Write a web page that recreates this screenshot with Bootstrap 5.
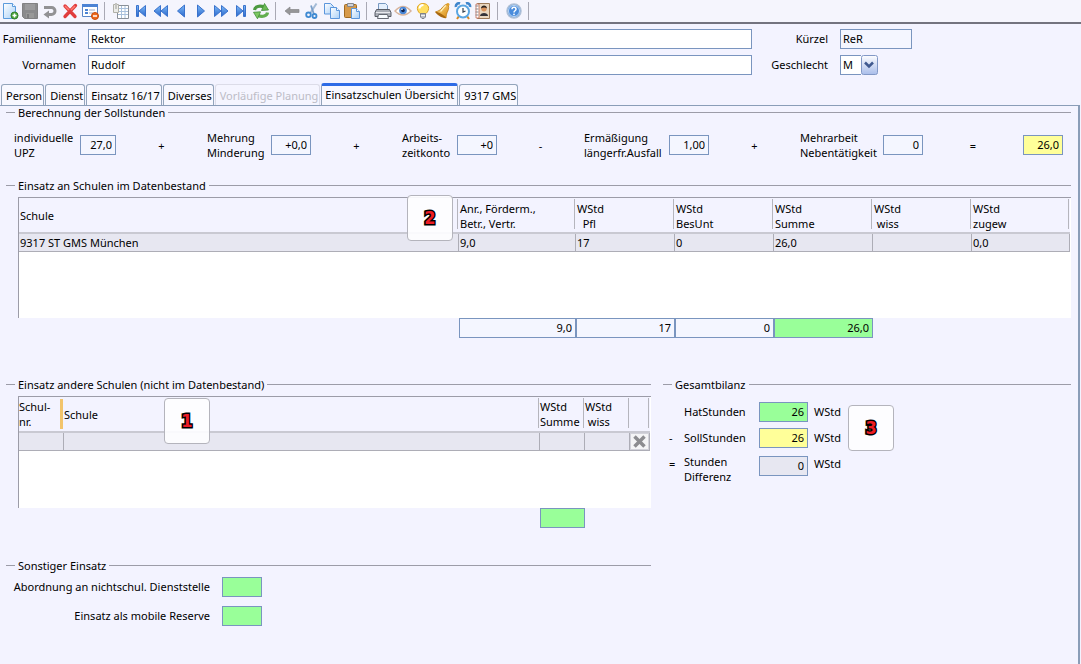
<!DOCTYPE html>
<html lang="de">
<head>
<meta charset="utf-8">
<meta name="viewport" content="width=device-width, initial-scale=1">
<title>Lehrkraft – Einsatzschulen Übersicht</title>
<link href="https://cdn.jsdelivr.net/npm/bootstrap@5.3.0/dist/css/bootstrap.min.css" rel="stylesheet">
<style>
:root { --bg:#f3f3ff; --edge:#7a95bf; --rule:#9c9ca8; --panel:#8a9db8; --hit:#99ff99; --soll:#ffff99; --rowbg:#e7e7f1; }
body { background:var(--bg); color:#000; font:11px/15px "Noto Sans","Open Sans",sans-serif; }
.toolbar { height:24px; border-bottom:2px solid #73737f; background:#f5f5fd; }
.tool { width:20px; height:22px; padding:0; border:0; background:none; display:flex; align-items:center; justify-content:center; }
.tool svg { width:18px; height:18px; }
.split { width:1px; height:18px; background:#a9a9b4; margin:0 6px 0 4px; }
.field { height:20px; border:1px solid var(--edge); border-radius:0; background:#fff; color:#000; padding:0 2px 1px; font:inherit; min-width:0; outline:0; }
.plain { background:#f4f6ff; }
.num { text-align:right; padding-right:3px; }
.hit { background:var(--hit); }
.soll { background:var(--soll); }
.diff { background:var(--rowbg); }
.w-s { width:36px; } .w-m { width:40px; } .w-l { width:49px; } .w-k { width:72px; }
.person { display:grid; grid-template-columns:76px 1fr 64px 229px; gap:6px 12px; padding:5px 12px 0 0; align-items:center; }
.person label, .other label, .balance label, .balance span { padding-bottom:2px; }
.pick { width:38px; height:20px; }
.pick select { width:38px; appearance:none; }
.pick svg { position:absolute; right:0; top:0; pointer-events:none; }
.tabs { gap:1px; margin-top:8px; height:22px; padding-left:1px; }
.tabs button { height:21px; padding:0 1px 0 4px; border:1px solid #93a4bb; border-bottom:0; border-radius:3px 3px 0 0; background:#f8f8ff; color:#000; font:inherit; line-height:15px; white-space:nowrap; }
.tabs button.active { height:22px; padding:0 3px 3px; border-top:3px solid #2e6be6; }
.tabs button:disabled { color:#bcbcc6; border-color:#dcdce8; background:#f5f5ff; }
.panel { border-top:1px solid var(--panel); border-right:2px solid var(--panel); margin-right:1px; padding:0 7px 0 6px; }
fieldset legend { float:none; display:flex; align-items:center; gap:3px; height:13px; margin:0; font-size:11px; line-height:13px; }
fieldset legend::before, fieldset legend::after { content:""; height:1px; background:var(--rule); }
fieldset legend::before { width:9px; }
fieldset legend::after { flex:1; }
.calc { display:grid; grid-template-columns:102px 91fr 104px 91fr 95px 87fr 125px 91fr 123px 100fr 40px; align-items:center; margin:11px 8px 19px; }
.calc > div { display:flex; justify-content:space-between; align-items:center; white-space:nowrap; }
.calc > span { text-align:center; }
.sheet { margin:5px 0 0 12px; border:solid var(--rule); border-width:1px 0 0 1px; background:#fff; padding-right:1px; }
.sheet-a { height:121px; } .sheet-b { height:112px; }
.sheet table { width:100%; table-layout:fixed; border-collapse:separate; border-spacing:0; }
.sheet th { height:36px; padding:1px 1px 0; font-weight:400; background:linear-gradient(#b5b5bd,#b5b5bd) right 1px bottom 3px/1px 30px no-repeat var(--bg); border-bottom:2px solid #c9c9d2; white-space:pre; position:relative; }
.sheet th.mark-col { background:linear-gradient(#f2c46c,#f2c46c) right 1px bottom 2px/3px 30px no-repeat var(--bg); }
.sheet-b th { padding:0; }
.sheet td { height:18px; padding:0 1px; line-height:17px; background:var(--rowbg); border:solid #adadb6; border-width:0 1px 1px 0; }
.c-45 { width:45px; } .c-20 { width:20px; } .c-98 { width:98px; } .c-99 { width:99px; } .c-117 { width:117px; }
.remove { display:block; width:19px; height:17px; padding:0; border:1px solid #d2d2da; background:#f4f4f6; line-height:0; }
.sums-a { padding-right:198px; margin-bottom:40px; } .sums-b { padding-right:66px; margin-bottom:31px; }
.lower { display:grid; grid-template-columns:645fr 408fr; gap:12px; }
.balance { display:grid; grid-template-columns:9px 69px 49px auto; gap:6px; margin-top:11px; padding-left:6px; align-items:center; }
.balance .low { align-self:start; margin-top:2px; }
.other { display:grid; grid-template-columns:204px 40px; gap:9px 12px; margin-top:5px; align-items:center; }
.callout-no { width:46px; height:46px; border:1px solid #b4b4bc; border-radius:4px; background:rgba(253,253,255,.93); display:flex; align-items:center; justify-content:center; font:700 18px/1 "DejaVu Sans Condensed","DejaVu Sans",sans-serif; color:#ed1c24; -webkit-text-stroke:3px #000; paint-order:stroke fill; }
.over { position:absolute; top:-3px; right:6px; z-index:2; }
.over-b { top:1px; left:100px; }
.side { margin:14px 0 0 7px; }
</style>
</head>
<body class="d-flex flex-column min-vh-100">
<svg width="0" height="0" class="position-absolute" aria-hidden="true">
  <defs>
    <linearGradient id="blue" x2="0" y2="1"><stop stop-color="#7dbbf8"/><stop offset="1" stop-color="#2a66cc"/></linearGradient>
    <linearGradient id="sheetfill" x2="1" y2="1"><stop stop-color="#fff"/><stop offset="1" stop-color="#a9d0f7"/></linearGradient>
    <linearGradient id="gold" x2="1" y2="1"><stop stop-color="#ffe28a"/><stop offset="1" stop-color="#d98a12"/></linearGradient>
    <linearGradient id="drop" x2="0" y2="1"><stop stop-color="#fdfdff"/><stop offset="1" stop-color="#a9bdea"/></linearGradient>
    <symbol id="tri" viewBox="0 0 18 18"><path d="M12.500 3v12L5.500 9z" fill="url(#blue)" stroke="#3a72cc"/></symbol>
    <symbol id="dbl" viewBox="0 0 18 18"><path d="M8.500 3.500v11L2 9zM15.500 3.500v11L9 9z" fill="url(#blue)" stroke="#3a72cc"/></symbol>
    <symbol id="end" viewBox="0 0 18 18"><path d="M4.500 3.500h2v11h-2zM13.500 3.500v11L7 9z" fill="url(#blue)" stroke="#3a72cc"/></symbol>
  </defs>
</svg>

<header class="toolbar d-flex align-items-center" role="toolbar" aria-label="Werkzeuge">
  <button class="tool" type="button" aria-label="Neu"><svg viewBox="0 0 18 18"><path d="M2.500 1.500h9l3 3v12h-12z" fill="url(#sheetfill)" stroke="#5b9bdc"/><path d="M11.500 1.500v3h3" fill="#fff" stroke="#5b9bdc"/><circle cx="13.500" cy="13.500" r="3.500" fill="#4aa53c" stroke="#2f7d28"/><path d="M13.500 11.500v4M11.500 13.500h4" stroke="#fff" stroke-width="1.500"/></svg></button>
  <button class="tool" type="button" aria-label="Speichern"><svg viewBox="0 0 18 18"><path d="M1.500 1.500h15v15h-13l-2-2z" fill="#8b8b8d" stroke="#818183"/><path d="M4 2h10v6H4z" fill="#9b9b9d"/><path d="M5 11h8v5H5z" fill="#999"/><path d="M6 12h2v4H6z" fill="#7d7d7f"/></svg></button>
  <button class="tool" type="button" aria-label="Rückgängig"><svg viewBox="0 0 18 18"><path d="M3 5.500h7.500a3.300 3.300 0 0 1 0 7H7" fill="none" stroke="#929294" stroke-width="3"/><path d="M8 8.500v8L2.500 12.500z" fill="#929294"/></svg></button>
  <button class="tool" type="button" aria-label="Löschen"><svg viewBox="0 0 18 18"><path d="M4 4l10 10.500M14.500 3.500L4 14.500" stroke="#e03c3c" stroke-width="3.300" stroke-linecap="round"/><path d="M4 4l4 4M14 4l-4 4" stroke="#ff7d74" stroke-width="1.500"/></svg></button>
  <button class="tool" type="button" aria-label="Formular schließen"><svg viewBox="0 0 18 18"><path d="M1.500 2.500h15v12h-15z" fill="#fff" stroke="#5a86c8"/><path d="M1 2h16v3H1z" fill="#4c83d4"/><path d="M4 8h3M4 11h3" stroke="#4c83d4" stroke-width="2"/><path d="M8 8h6M8 11h4" stroke="#9aa9c4"/><circle cx="14" cy="14" r="3.500" fill="#ee6a1c" stroke="#c74d0d"/><path d="M12 14h4" stroke="#fff" stroke-width="1.500"/></svg></button>
  <span class="split"></span>
  <button class="tool" type="button" aria-label="Liste"><svg viewBox="0 0 18 18"><path d="M5.500 3.500h11v13h-11z" fill="#fff" stroke="#8a9098"/><path d="M6 6.500h10M6 9.500h10M6 12.500h10M9.500 4v12M13 4v12" stroke="#a9c0dc"/><path d="M1.500 2.500h5v8h-5z" fill="#ecece8" stroke="#b0b0a8"/><path d="M3 1h2v6H3z" fill="#c4c4c0"/></svg></button>
  <button class="tool" type="button" aria-label="Erster"><svg><use href="#end"/></svg></button>
  <button class="tool" type="button" aria-label="Schnell zurück"><svg><use href="#dbl"/></svg></button>
  <button class="tool" type="button" aria-label="Zurück"><svg><use href="#tri"/></svg></button>
  <button class="tool" type="button" aria-label="Weiter"><svg viewBox="0 0 18 18"><use href="#tri" transform="matrix(-1 0 0 1 18 0)"/></svg></button>
  <button class="tool" type="button" aria-label="Schnell vor"><svg viewBox="0 0 18 18"><use href="#dbl" transform="matrix(-1 0 0 1 18 0)"/></svg></button>
  <button class="tool" type="button" aria-label="Letzter"><svg viewBox="0 0 18 18"><use href="#end" transform="matrix(-1 0 0 1 18 0)"/></svg></button>
  <button class="tool" type="button" aria-label="Aktualisieren"><svg viewBox="0 0 18 18"><path d="M2.500 8C3 4.500 7.500 3 12.500 5.200" fill="none" stroke="#4c9a40" stroke-width="3.200"/><path d="M12.500 1.500l4 6.500-7 .5z" fill="#6cb955" stroke="#3f8f36" stroke-width=".8"/><path d="M15.500 10.500c-.5 3.500-5 5-10 2.800" fill="none" stroke="#62ae50" stroke-width="3.200"/><path d="M5.500 16.800l-4-6.500 7-.5z" fill="#7cc763" stroke="#3f8f36" stroke-width=".8"/></svg></button>
  <span class="split"></span>
  <button class="tool" type="button" aria-label="Abbrechen"><svg viewBox="0 0 18 18"><path d="M2 9l5-4v2.500h9v3H7V13z" fill="#969698" stroke="#87878a" stroke-width=".7"/></svg></button>
  <button class="tool" type="button" aria-label="Ausschneiden"><svg viewBox="0 0 18 18"><path d="M13.500 1.500L7 11.500" stroke="#a4bbd6" stroke-width="2"/><path d="M8 3.500l3 9" stroke="#7a9fca" stroke-width="1.800"/><circle cx="5.500" cy="12.800" r="2.300" fill="none" stroke="#3f8ad2" stroke-width="1.800"/><circle cx="11.500" cy="14" r="2" fill="none" stroke="#3f8ad2" stroke-width="1.800"/></svg></button>
  <button class="tool" type="button" aria-label="Kopieren"><svg viewBox="0 0 18 18"><path d="M1.500 1.500h6l3 3v7.500h-9z" fill="url(#sheetfill)" stroke="#5b96dc"/><path d="M7.500 5.500h6l3 3v8h-9z" fill="url(#sheetfill)" stroke="#5b96dc"/><path d="M13.500 5.500v3h3" fill="#fff" stroke="#5b96dc"/></svg></button>
  <button class="tool" type="button" aria-label="Einfügen"><svg viewBox="0 0 18 18"><rect x="1.500" y="2.500" width="12" height="13" rx="1" fill="#d79a4a" stroke="#a06a22"/><path d="M4.500 1.500h6v3h-6z" fill="#d0d3da" stroke="#85888f"/><path d="M8.500 6.500h5l3 3v7h-8z" fill="url(#sheetfill)" stroke="#5b96dc"/><path d="M13.500 6.500v3h3" fill="#fff" stroke="#5b96dc"/></svg></button>
  <span class="split"></span>
  <button class="tool" type="button" aria-label="Drucken"><svg viewBox="0 0 18 18"><path d="M4.500 8V1.500h7l2 2V8" fill="#e4effc" stroke="#7798c0"/><path d="M2.500 7.500h13l1.500 3v4H1v-4z" fill="#a9adb6" stroke="#585c66"/><path d="M2 10.500h14" stroke="#e9e9ee"/><path d="M4.500 12.500h9l1 4h-11z" fill="#f8fbff" stroke="#666a74"/></svg></button>
  <button class="tool" type="button" aria-label="Vorschau"><svg viewBox="0 0 18 18"><path d="M1 9q8-9 16 0-8 8-16 0z" fill="#fff" stroke="#d8b49c" stroke-width="1.500"/><circle cx="9" cy="8.500" r="3.800" fill="#4a87d8"/><circle cx="9" cy="8.500" r="1.800" fill="#10234f"/><circle cx="8" cy="7.200" r=".8" fill="#fff"/></svg></button>
  <button class="tool" type="button" aria-label="Hinweis"><svg viewBox="0 0 18 18"><path d="M6 11.500C1.500 7.500 3 1.500 9 1.500s7.500 6 3 10z" fill="#ffdf62" stroke="#e0a526"/><path d="M5.500 6.500a4 4 0 0 1 4-3.500" stroke="#fff" stroke-width="2" fill="none"/><path d="M6.500 11.500h5v3.500l-1.500 1.500H8L6.500 15z" fill="#b5b9c2" stroke="#7e828c"/><path d="M7 13.500h4" stroke="#eee"/></svg></button>
  <button class="tool" type="button" aria-label="Erinnerung"><svg viewBox="0 0 18 18"><path d="M13.500 2C11 2.500 9.500 4 8 6 6 8.500 4 9 1.500 10l10.500 6c.2-3 .6-4.500 1.800-7 1-2 1.500-4.500-.3-7z" fill="url(#gold)" stroke="#c07c12" stroke-width=".8"/><path d="M1.500 10c1-1 9.500 3.500 10.500 6-2 1-10-3-10.500-6z" fill="#a8670f"/><path d="M12 3.500C9.500 5 8.500 8 6.500 9.500" stroke="#fff3c0" fill="none" stroke-width="1.200"/><circle cx="14" cy="2.500" r="1.500" fill="#e0a02a"/></svg></button>
  <button class="tool" type="button" aria-label="Termine"><svg viewBox="0 0 18 18"><path d="M2 5a3 3 0 0 1 4-3.500M16 5a3 3 0 0 0-4-3.500" stroke="#3f86cc" stroke-width="2.600" fill="none"/><path d="M5 14l-2 3M13 14l2 3" stroke="#d88a24" stroke-width="2"/><circle cx="9" cy="9.500" r="6" fill="#fff" stroke="#5aa6e2" stroke-width="2"/><path d="M9 6v4l2.500-1" stroke="#33414f" fill="none" stroke-width="1.200"/></svg></button>
  <button class="tool" type="button" aria-label="Adressbuch"><svg viewBox="0 0 18 18"><path d="M3.500 1.500h12v15h-12z" fill="#e9d7bf" stroke="#9b7a59"/><path d="M2 2h3v14H2z" fill="#fff" stroke="#bf6750" stroke-width=".8"/><path d="M1.500 4h3M1.500 7h3M1.500 10h3M1.500 13h3" stroke="#8b8b92"/><path d="M6 14c0-4 8-4 8 0z" fill="#34343a"/><circle cx="10" cy="6.800" r="2.700" fill="#d9935c"/><path d="M7 6.500c0-4 6-4 6 0-1.500-1.500-4-1.500-6 0z" fill="#2d2420"/></svg></button>
  <span class="split"></span>
  <button class="tool" type="button" aria-label="Hilfe"><svg viewBox="0 0 18 18"><circle cx="9" cy="9" r="7" fill="#5a9ce4" stroke="#aebfd6" stroke-width="1.500"/><circle cx="9" cy="9" r="5.500" fill="#4a8cdc" stroke="#d7e6f8" stroke-width=".8"/><path d="M7 7.300c0-2.600 4-2.600 4 0 0 1.500-2 1.500-2 3.200" fill="none" stroke="#fff" stroke-width="1.500"/><circle cx="9" cy="12.300" r=".9" fill="#fff"/></svg></button>
  <span class="split"></span>
</header>

<form class="person">
  <label class="text-end" for="fam">Familienname</label><input class="field" id="fam" value="Rektor">
  <label class="text-end" for="kz">Kürzel</label><input class="field plain w-k" id="kz" value="ReR" readonly>
  <label class="text-end" for="vor">Vornamen</label><input class="field" id="vor" value="Rudolf">
  <label class="text-end" for="sex">Geschlecht</label>
  <div class="pick position-relative d-flex"><select class="field" id="sex"><option>M</option><option>W</option></select>
    <svg width="17" height="20" viewBox="0 0 17 20"><rect width="17" height="20" fill="#f3f3ff"/><rect x=".5" y=".5" width="16" height="19" rx="2" fill="url(#drop)" stroke="#8298c6"/><path d="M4 7.500l4 4 4-4" fill="none" stroke="#40598f" stroke-width="2.500"/></svg></div>
</form>

<nav class="tabs d-flex align-items-end" role="tablist">
  <button type="button" role="tab">Person</button>
  <button type="button" role="tab">Dienst</button>
  <button type="button" role="tab">Einsatz 16/17</button>
  <button type="button" role="tab">Diverses</button>
  <button type="button" role="tab" disabled>Vorläufige Planung</button>
  <button type="button" role="tab" class="active" aria-selected="true">Einsatzschulen Übersicht</button>
  <button type="button" role="tab">9317 GMS</button>
</nav>

<main class="panel flex-grow-1">
  <fieldset>
    <legend>Berechnung der Sollstunden</legend>
    <div class="calc">
      <div><label for="upz">individuelle<br>UPZ</label><input class="field plain num w-s" id="upz" value="27,0" readonly></div>
      <span>+</span>
      <div><label for="mm">Mehrung<br>Minderung</label><input class="field plain num w-m" id="mm" value="+0,0" readonly></div>
      <span>+</span>
      <div><label for="azk">Arbeits-<br>zeitkonto</label><input class="field plain num w-m" id="azk" value="+0" readonly></div>
      <span>-</span>
      <div><label for="erm">Ermäßigung<br>längerfr.Ausfall</label><input class="field plain num w-m" id="erm" value="1,00" readonly></div>
      <span>+</span>
      <div><label for="mna">Mehrarbeit<br>Nebentätigkeit</label><input class="field plain num w-m" id="mna" value="0" readonly></div>
      <span>=</span>
      <input class="field num soll w-m" aria-label="Sollstunden" value="26,0" readonly>
    </div>
  </fieldset>

  <fieldset>
    <legend>Einsatz an Schulen im Datenbestand</legend>
    <div class="sheet sheet-a">
      <table>
        <colgroup><col><col class="c-117"><col class="c-99"><col class="c-99"><col class="c-99"><col class="c-99"><col class="c-98"></colgroup>
        <thead><tr><th>Schule<span class="callout-no over">2</span></th><th>Anr., Förderm.,<br>Betr., Vertr.</th><th>WStd<br>&nbsp; Pfl</th><th>WStd<br>BesUnt</th><th>WStd<br>Summe</th><th>WStd<br>&nbsp;wiss</th><th>WStd<br>zugew</th></tr></thead>
        <tbody><tr><td>9317 ST GMS München</td><td>9,0</td><td>17</td><td>0</td><td>26,0</td><td></td><td>0,0</td></tr></tbody>
      </table>
    </div>
    <div class="sums-a d-flex justify-content-end">
      <input class="field plain num c-117" aria-label="Summe Anrechnungen" value="9,0" readonly>
      <input class="field plain num c-99" aria-label="Summe Pflicht" value="17" readonly>
      <input class="field plain num c-99" aria-label="Summe BesUnt" value="0" readonly>
      <input class="field hit num c-99" aria-label="Gesamtsumme" value="26,0" readonly>
    </div>
  </fieldset>

  <div class="lower">
    <div>
      <fieldset>
        <legend>Einsatz andere Schulen (nicht im Datenbestand)</legend>
        <div class="sheet sheet-b">
          <table>
            <colgroup><col class="c-45"><col><col class="c-45"><col class="c-45"><col class="c-20"></colgroup>
            <thead><tr><th class="mark-col">Schul-<br>nr.</th><th>Schule<span class="callout-no over over-b">1</span></th><th>WStd<br>Summe</th><th>WStd<br>&nbsp;wiss</th><th aria-label="Entfernen"></th></tr></thead>
            <tbody><tr><td></td><td></td><td></td><td></td><td class="p-0"><button class="remove" type="button" aria-label="Zeile entfernen"><svg width="15" height="15" viewBox="0 0 15 15"><path d="M2.500 2.500l10 10M12.500 2.500l-10 10" stroke="#8c8c90" stroke-width="3.500"/></svg></button></td></tr></tbody>
          </table>
        </div>
        <div class="sums-b d-flex justify-content-end"><input class="field hit num c-45" aria-label="Summe andere Schulen" readonly></div>
      </fieldset>
      <fieldset>
        <legend>Sonstiger Einsatz</legend>
        <div class="other">
          <label class="text-end" for="abo">Abordnung an nichtschul. Dienststelle</label><input class="field hit num" id="abo" readonly>
          <label class="text-end" for="mob">Einsatz als mobile Reserve</label><input class="field hit num" id="mob" readonly>
        </div>
      </fieldset>
    </div>
    <fieldset>
      <legend>Gesamtbilanz</legend>
      <div class="d-flex align-items-start">
        <div class="balance">
          <span></span><label for="hat">HatStunden</label><input class="field hit num w-l" id="hat" value="26" readonly><span>WStd</span>
          <span>-</span><label for="sol">SollStunden</label><input class="field soll num w-l" id="sol" value="26" readonly><span>WStd</span>
          <span class="low">=</span><label for="dif">Stunden<br>Differenz</label><input class="field diff num w-l low" id="dif" value="0" readonly><span class="low">WStd</span>
        </div>
        <span class="callout-no side">3</span>
      </div>
    </fieldset>
  </div>
</main>
<script src="https://cdn.jsdelivr.net/npm/bootstrap@5.3.0/dist/js/bootstrap.bundle.min.js"></script>
</body>
</html>
